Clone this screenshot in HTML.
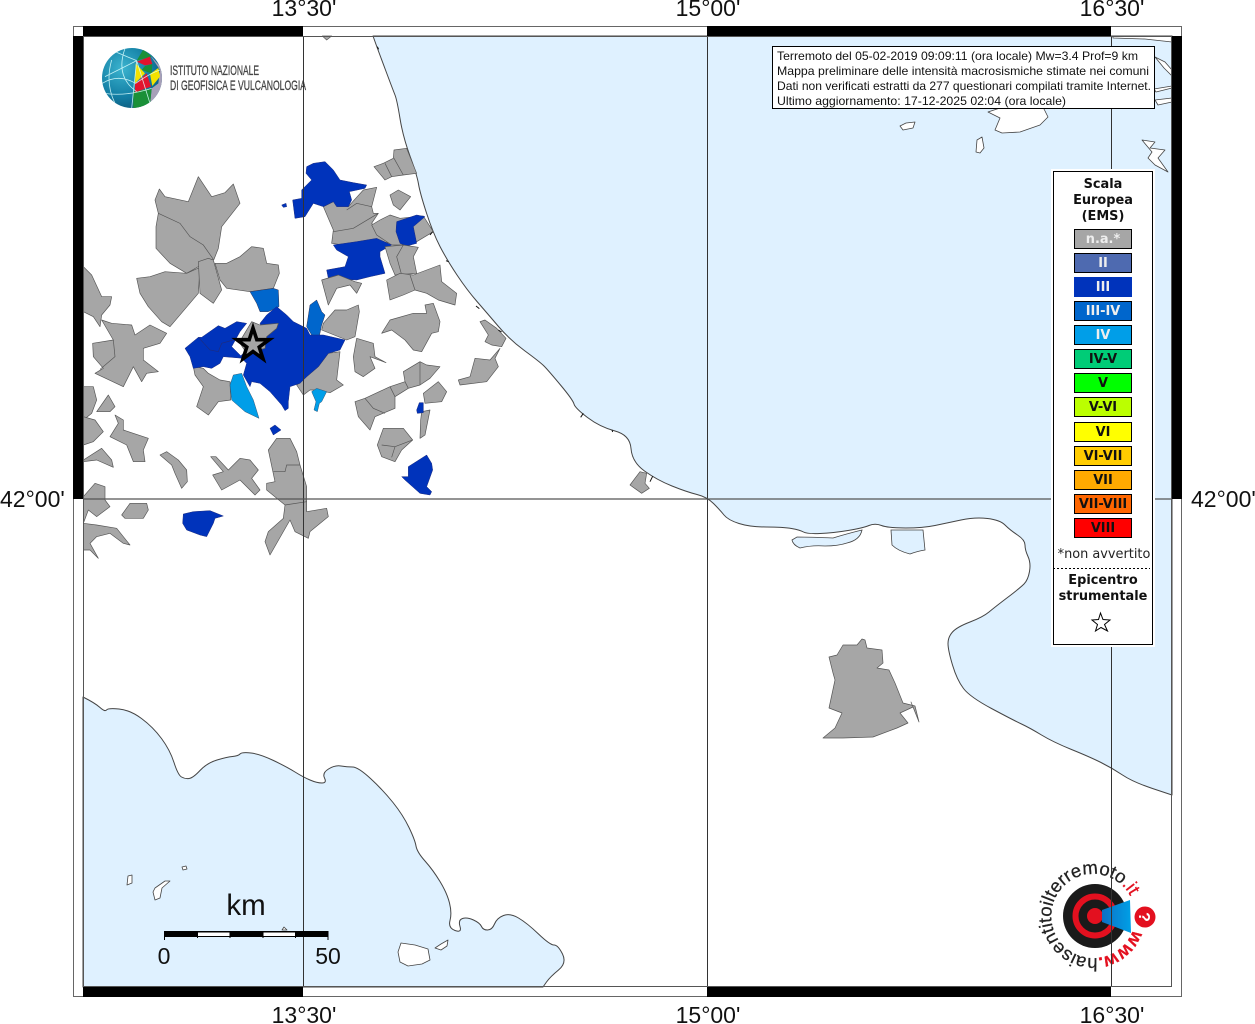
<!DOCTYPE html>
<html><head><meta charset="utf-8"><title>Mappa</title>
<style>
html,body{margin:0;padding:0;background:#fff}
svg{display:block}
text{font-family:"Liberation Sans",sans-serif}
.d{font-family:"DejaVu Sans",sans-serif;font-size:12.9px;text-anchor:middle}
.b{font-weight:bold}
.g{fill:#a6a6a6;stroke:#555;stroke-width:2;stroke-linejoin:round}
.n{fill:#0033bb;stroke:#1c2c80;stroke-width:1.5;stroke-linejoin:round}
.m{fill:#0066cc;stroke:#335;stroke-width:1.5}
.l{fill:#009ee8;stroke:#357;stroke-width:1.5}
.i{fill:none;stroke:#555;stroke-width:2}
.c{fill:#fff;stroke:#444;stroke-width:.8;stroke-linejoin:round}
.ax{font-size:23px;fill:#111}
</style></head><body>
<svg width="1255" height="1024" viewBox="0 0 1255 1024" xmlns="http://www.w3.org/2000/svg">
<rect width="1255" height="1024" fill="#fff"/>
<!-- Adriatic -->
<path fill="#dff1ff" stroke="#444" stroke-width="1" stroke-linejoin="round" d="M373 36L375.5 43Q378 50 385.5 70Q393 90 395 95Q397 100 400 118.5Q403 137 410 156Q417 175 418.5 184Q420 193 426.5 213Q433 233 440 246.5Q447 260 457 275Q467 290 477 301.5Q487 313 498.5 326.5Q510 340 525 351Q540 362 544 366Q548 370 560.5 385Q573 400 574 404Q575 408 587.5 417.5Q600 427 615 431Q630 435 631 448.5Q632 462 644.5 471Q657 480 672 486Q687 492 697 494.5Q707 497 713.5 503.5Q720 510 724 515Q728 520 739 523.5Q750 527 766.5 527Q783 527 791.5 528.5Q800 530 803.5 532Q807 534 820 533.5Q833 533 848 530.5Q863 528 869 525.5Q875 523 881.5 525.5Q888 528 905.5 528Q923 528 935 525.5Q947 523 961 520Q975 517 987.5 518.5Q1000 520 1005 525Q1010 530 1017.5 535Q1025 540 1025 545Q1025 550 1028 556.5Q1031 563 1029.5 571.5Q1028 580 1024 584Q1020 588 1007.5 597.5Q995 607 989 612Q983 617 970 622Q957 627 952.5 632Q948 637 948 643.5Q948 650 952.5 665Q957 680 963.5 688.5Q970 697 991.5 708.5Q1013 720 1021.5 724Q1030 728 1041.5 735Q1053 742 1071.5 749.5Q1090 757 1101 762.5Q1112 768 1122.5 775Q1133 782 1152.5 788.5L1172 795L1172 36Z"/>
<!-- lagoons -->
<path fill="#dff1ff" stroke="#444" stroke-width=".8" d="M792 540Q793 545 800 548Q812 545 825 546Q838 546 847 543Q860 540 862 530Q846 534 833 538Q810 537 797 537ZM891 530L892 545Q898 551 910 554Q918 551 925 550L923 530Z"/>
<!-- Adriatic islands -->
<path class="c" d="M988 112L1000 118 995 130 1002 133 1020 132 1040 125 1048 117 1043 107 1020 106 1000 108ZM900 126L906 123 915 122 913 128 903 130ZM977 140L982 137 984 148 980 153 976 152ZM1142 140L1155 142 1150 148 1165 150 1158 158 1168 172 1155 165 1148 158 1152 152ZM1113 36L1172 36 1172 42 1145 39 1113 38ZM1155 57L1165 62 1172 70 1172 76 1164 68ZM1154 89L1172 86 1172 88 1156 92ZM1155 100L1172 98 1172 102 1158 105Z"/>
<!-- Tyrrhenian -->
<path fill="#dff1ff" stroke="#444" stroke-width="1" stroke-linejoin="round" d="M83 697Q95 703 100 707.5Q105 712 106.5 710Q108 708 119 709Q130 710 141.5 718.5Q153 727 161.5 738.5Q170 750 174 762.5Q178 775 181.5 777Q185 779 189 778.5Q193 778 200 770.5Q207 763 217 760Q227 757 232.5 756.5Q238 756 240 754Q242 752 251 753Q260 754 273.5 760.5Q287 767 295 772Q303 777 310 780Q317 783 322 783Q327 783 324.5 778Q322 773 328.5 769Q335 765 341 766Q347 767 352.5 767Q358 767 370.5 778.5Q383 790 393 802.5Q403 815 409 827.5Q415 840 416 846Q417 852 425 861Q433 870 440 881.5Q447 893 449.5 903Q452 913 450 920.5Q448 928 455 930.5Q462 933 460 926.5Q458 920 462.5 918.5Q467 917 473.5 920Q480 923 481.5 926.5Q483 930 487.5 930Q492 930 494.5 924Q497 918 503.5 915.5Q510 913 518.5 918Q527 923 538.5 934Q550 945 554 945Q558 945 562.5 954Q567 963 558.5 970Q550 977 546.5 982L543 987L83 987Z"/>
<path class="c" d="M401 943L415 945 428 949 430 960 422 964 408 966 400 962 398 952ZM435 948L441 944 448 940 447 946 441 950ZM155 888L165 881 170 881 162 888 160 898 155 900 153 892ZM182 867L186 866 187 869 183 870ZM128 876L132 875 132 883 127 885ZM282 930L284 927 287 930Z"/>

<!-- Foggia area -->
<path class="g" style="stroke-width:.7" d="M862 639L857 645 843 645 837 655 829 657 833 673 835 680 829 708 842 713 835 728 823 738 843 738 873 737 897 728 908 723 900 713 913 707 911 702 919 722 915 706 903 703 895 683 889 670 877 668 883 663 882 650 867 648 865 640Z"/>

<!-- zoom 1 set -->
<g transform="translate(70 0) scale(.33333)">
<path class="g" d="M255 600L268 567 285 590 355 605 385 530 425 590 465 578 490 552 510 610 455 680 445 745 432 778 415 790 385 800 350 820 300 790 258 745 258 680 265 640Z"/>
<path class="i" d="M265 640L330 670 360 710 400 735 430 778"/>
<path class="g" d="M757 108L785 108 770 120Z"/>
<path class="g" d="M912 500L940 490 970 475 972 450 1010 445 1040 520 1000 525 965 530 945 540Z"/>
<path class="i" d="M945 490L965 530M972 475L1000 525"/>
<path class="g" d="M960 585L985 570 1022 590 990 630 970 615Z"/>
<path class="g" d="M760 620L790 605 835 620 848 605 880 570 920 562 905 620 910 640 925 640 905 670 930 690 965 720 965 730 900 720 820 735 785 730 790 690Z"/>
<path class="i" d="M830 630L860 610 905 620M790 695L850 685 925 640"/>
<path class="g" d="M905 675L930 660 960 645 990 655 1060 648 1090 695 1040 725 1005 735 965 735 920 705Z"/>
<path class="n" d="M710 500L730 490 765 485 790 510 810 540 850 548 890 555 885 565 838 575 845 600 835 620 800 620 790 605 760 620 730 610 705 650 675 655 668 600 695 595 695 570 725 540 708 520Z"/>
<path class="n" d="M635 615L648 610 650 620 640 622Z"/>
<path class="n" d="M980 665L1040 645 1065 650 1030 680 1040 730 1010 738 990 730 978 695Z"/>
<path class="n" d="M790 735L860 725 920 715 965 735 930 755 930 770 945 820 900 830 860 840 775 835 770 810 825 800 835 770 800 750Z"/>
</g>

<!-- zoom 10 set -->
<g transform="translate(370 20) scale(.33333)">
<path class="g" d="M45 680L100 675 145 682 130 710 140 760 75 765 60 730Z"/>
<path class="i" d="M100 675L80 710 95 765"/>
<path class="g" d="M330 905L345 900 380 925 408 955 395 980 365 975 345 965 355 945Z"/>
<path class="g" d="M390 985L375 1015 385 1040 350 1085 270 1095 265 1080 300 1070 315 1015 360 1020Z"/>
<path class="g" d="M810 1355L830 1360 825 1390 838 1405 815 1420 780 1395Z"/>
<path d="M22 80l4 8M180 645l8-10M228 722l8 3M318 858l10 8M385 930l10 6M632 1192l8-12M726 1230l2 6M840 1385l8-16" stroke="#111" stroke-width="3" fill="none"/>
</g>

<!-- zoom 2 set -->
<g transform="translate(80 260) scale(.33333)">
<path class="g" d="M170 55L210 50 255 35 320 40 360 22 355 100 270 200 245 185 205 140 180 100Z"/>
<path class="g" d="M355 5L385 -5 400 0 425 90 400 130 360 100Z"/>
<path class="g" d="M405 10L440 10 480 -10 515 -40 550 -35 560 10 595 15 598 40 580 85 510 95 440 85 420 60Z"/>
<path class="g" d="M725 60L775 45 825 65 845 70 830 100 810 75 770 85 745 135Z"/>
<path class="g" d="M920 60L960 40 1000 45 1080 15 1085 65 1130 100 1125 135 1075 120 1040 100 1005 90 970 105 930 120Z"/>
<path class="i" d="M990 45L1005 90"/>
<path class="g" d="M730 190L765 150 800 150 835 135 838 155 825 230 800 240 725 210Z"/>
<path class="g" d="M830 235L880 250 885 290 918 308 870 290 885 325 850 350 825 335 820 290Z" />
<path class="g" d="M905 220L930 180 1000 160 1040 160 1035 135 1060 130 1080 185 1075 215 1055 220 1025 275 1000 270 975 240 935 210Z"/>
<path class="g" d="M650 375L680 350 715 320 745 280 780 275 770 360 790 375 750 398 710 390 690 390 670 405Z"/>
<path class="g" d="M825 425L855 415 930 380 975 365 970 335 1020 305 1040 315 1080 320 1050 355 1020 375 985 385 945 410 945 445 885 470 870 510 835 470Z"/>
<path class="i" d="M855 415L880 445 915 460M930 380L945 410M975 365L985 385M1020 305L1020 375"/>
<path class="g" d="M1030 400L1075 365 1100 395 1085 425 1035 430Z"/>
<path class="g" d="M1025 455L1050 450 1035 525 1020 535 1022 480Z"/>
<path class="g" d="M892 555L910 505 970 505 998 540 965 570 945 605 905 590Z"/>
<path class="i" d="M905 555L945 560 998 540M945 560L935 592"/>
<path class="g" d="M10 20L35 45 65 110 95 110 90 135 65 165 60 200 40 170 10 155Z"/>
<path class="g" d="M38 250L100 240 65 180 95 190 155 195 165 225 210 195 260 220 240 250 190 265 190 300 235 335 200 340 185 365 160 320 130 380 45 340 70 325 40 290Z"/>
<path class="i" d="M100 240L105 290 60 328"/>
<path class="g" d="M340 320L370 325 385 340 420 360 450 365 452 420 415 425 385 465 350 440 370 380 345 345Z"/>
<path class="g" d="M10 380L40 380 50 420 35 460 10 480Z"/>
<path class="g" d="M50 455L85 405 105 440 90 455Z"/>
<path class="g" d="M10 470L45 480 70 515 40 545 10 555Z"/>
<path class="g" d="M10 600L65 565 95 600 100 622 50 600 10 605Z"/>
<path class="g" d="M90 530L115 490 105 465 130 480 130 510 205 535 190 570 195 605 160 605 140 555Z"/>
<path class="g" d="M240 585L260 575 295 600 320 630 322 665 305 685 285 640 275 615Z"/>
<path class="g" d="M392 590L408 590 445 630 480 595 510 600 535 630 515 655 540 690 525 705 480 660 425 690 398 645 430 635Z"/>
<path class="g" d="M565 570L590 535 630 535 650 575 660 615 680 680 680 755 740 745 745 770 690 815 685 835 645 815 630 780 570 885 555 845 565 815 610 775 615 735 560 690 560 670 585 665Z"/>
<path class="i" d="M580 635L615 635 620 615 660 615M615 735L680 725"/>
<path class="g" d="M10 710L45 670 75 680 75 720 90 740 50 770 25 750 10 790 50 795 110 805 150 855 130 850 90 820 50 830 30 850 55 895 30 870 10 870Z"/>
<path class="g" d="M125 765L150 730 200 730 205 750 190 775 135 775Z"/>

<path class="m" d="M510 95L580 85 595 90 597 140 565 155 540 155 530 130Z"/>
<path class="m" d="M680 200L690 135 710 120 725 155 735 165 725 195 718 228 695 225Z"/>
<path class="n" d="M540 190L560 165 590 140 620 165 640 185 680 205 690 225 730 225 795 240 780 270 745 280 715 320 680 350 660 370 630 380 625 425 625 445 615 452 605 435 570 395 540 370 515 365 510 380 490 345 500 310 480 290 520 250 560 240Z"/>
<path class="n" d="M315 265L355 232 365 232 415 197 435 205 470 185 500 190 480 215 455 260 490 295 430 290 420 310 395 325 370 320 340 325 330 290Z"/>
<path fill="none" stroke="#1c2c80" stroke-width="2" d="M355 232L390 270 415 275 425 250 460 240"/>
<path class="g" d="M515 185L540 195 595 190 590 205 560 230 555 265 500 280 480 250 485 235Z"/>
<path class="l" d="M460 345L485 340 500 380 520 420 537 475 495 455 455 420 450 375Z"/>
<path class="l" d="M695 395L710 385 740 395 725 425 718 430 712 455 702 450 708 425Z"/>
<path class="n" d="M570 505L585 495 603 510 580 525Z"/>
<path class="n" d="M1010 450L1018 428 1030 428 1030 458 1012 460Z"/>
<path class="n" d="M985 620L1040 585 1055 610 1058 630 1040 680 1055 695 1050 705 1020 700 975 660 965 650 985 650Z"/>
<path class="n" d="M310 762L340 755 390 752 430 768 405 775 400 790 380 830 360 825 320 810 308 790Z"/>
</g>

<!-- epicentre star -->
<polygon points="253,328 256.8,339.7 269.2,339.7 259.2,347 263,358.8 253,351.5 243,358.8 246.8,347 236.8,339.7 249.2,339.7" fill="#a6a6a6" stroke="#000" stroke-width="3.6" stroke-miterlimit="4"/>

<!-- INGV logo -->
<defs>
<radialGradient id="gl" cx=".35" cy=".35" r=".75"><stop offset="0" stop-color="#3bb4cf"/><stop offset=".6" stop-color="#127da3"/><stop offset="1" stop-color="#0d4f70"/></radialGradient>
<linearGradient id="cone" x1="0" y1="0" x2="1" y2="0"><stop offset="0" stop-color="#0d6fc4"/><stop offset="1" stop-color="#00a0e6"/></linearGradient>
<clipPath id="gc"><circle cx="132" cy="78" r="30"/></clipPath>
</defs>
<g clip-path="url(#gc)">
<rect x="100" y="46" width="64" height="64" fill="url(#gl)"/>
<g transform="translate(95 40) scale(.33333)">
<path fill="#a7a0b8" d="M165 45L205 90 200 150 165 195 170 145 190 130 195 90Z"/>
<path fill="#1a9038" d="M125 62L145 28 170 50ZM150 78L172 72 170 100 140 90ZM115 155L170 145 165 195 115 205Z"/>
<path fill="#e2142d" d="M125 65L165 50 172 72 150 76ZM120 132L155 100 168 140 120 157Z"/>
<path fill="#f2e200" d="M122 70L150 100 120 130ZM165 102L190 84 195 110 172 138Z"/>
<g fill="none" stroke="#dff" stroke-width="2.4" opacity=".85">
<path d="M125 62L110 205M125 62L60 35M125 62L30 110M125 62L165 190M50 60Q30 130 60 190M90 25Q60 110 125 155M22 130Q70 100 122 130 165 100 195 90M30 160Q90 170 170 145"/>
</g></g></g>
<text x="170" y="75" font-size="14" fill="#444" stroke="#444" stroke-width=".3" textLength="89" lengthAdjust="spacingAndGlyphs">ISTITUTO NAZIONALE</text>
<text x="170" y="90" font-size="14" fill="#444" stroke="#444" stroke-width=".3" textLength="136" lengthAdjust="spacingAndGlyphs">DI GEOFISICA E VULCANOLOGIA</text>

<!-- haisentito logo -->
<circle cx="1095" cy="916" r="32" fill="#1a1a1a"/>
<circle cx="1095" cy="916" r="19.5" fill="none" stroke="#e3101f" stroke-width="6"/>
<circle cx="1095" cy="916" r="8" fill="#e3101f"/>
<path d="M1102 910L1130 900 1131 933 1118 928 1102 922Z" fill="url(#cone)"/>
<circle cx="1145" cy="917" r="10.5" fill="#e3101f"/>
<text x="1145" y="923" font-size="16" font-weight="bold" fill="#fff" text-anchor="middle" transform="rotate(90 1145 917)">?</text>
<path id="ring" fill="none" d="M1133 929.600A42 42 0 1 1 1133 902.400"/>
<text font-size="18.5" fill="#222" stroke="#222" stroke-width=".25"><textPath href="#ring"><tspan fill="#e3101f" stroke="#e3101f" font-weight="bold">www.</tspan>haisentito<tspan font-weight="normal">il</tspan>terremoto<tspan fill="#e3101f" stroke="#e3101f">.it</tspan></textPath></text>

<!-- grid -->
<path d="M303.5 36V987M707.5 36V987M1111.5 36V987" stroke="#333" stroke-width="1" fill="none"/>
<path d="M83 499H1172" stroke="#555" stroke-width="1.3" fill="none"/>

<!-- frame -->
<rect x="73.5" y="26.5" width="1108" height="970" fill="none" stroke="#666" stroke-width="1"/>
<rect x="83.5" y="36.5" width="1088" height="950" fill="none" stroke="#555" stroke-width="1"/>
<path fill="#000" d="M83 26H303V36H83ZM707 26H1111V36H707ZM83 987H303V997H83ZM707 987H1111V997H707ZM73 36H83V499H73ZM1172 36H1182V499H1172Z"/>

<!-- axis labels -->
<g class="ax">
<text class="ax" x="304" y="16" text-anchor="middle">13°30'</text>
<text class="ax" x="708" y="16" text-anchor="middle">15°00'</text>
<text class="ax" x="1112" y="16" text-anchor="middle">16°30'</text>
<text class="ax" x="304" y="1023" text-anchor="middle">13°30'</text>
<text class="ax" x="708" y="1023" text-anchor="middle">15°00'</text>
<text class="ax" x="1112" y="1023" text-anchor="middle">16°30'</text>
<text class="ax" x="0" y="507">42°00'</text>
<text class="ax" x="1191" y="507">42°00'</text>
</g>

<!-- scale bar -->
<path d="M164 931H328V937H164Z" fill="#000"/>
<path d="M197 932.5H230V936H197ZM263 932.5H295V936H263Z" fill="#fff"/>
<path d="M164.5 931V940M197.5 931V938M230 931V938M263 931V938M295.5 931V938M328 931V940" stroke="#000" stroke-width="1" fill="none"/>
<text x="246" y="915" font-size="29.5" text-anchor="middle" fill="#111">km</text>
<text x="164" y="964" font-size="23" text-anchor="middle" fill="#111">0</text>
<text x="328" y="964" font-size="23" text-anchor="middle" fill="#111">50</text>

<!-- info box -->
<rect x="772.5" y="46.5" width="382" height="62" fill="#fff" stroke="#000" stroke-width="1"/>
<g font-size="12" fill="#111">
<text x="777" y="60" textLength="361" lengthAdjust="spacingAndGlyphs">Terremoto del 05-02-2019 09:09:11 (ora locale) Mw=3.4 Prof=9 km</text>
<text x="777" y="75" textLength="372" lengthAdjust="spacingAndGlyphs">Mappa preliminare delle intensità macrosismiche stimate nei comuni</text>
<text x="777" y="90" textLength="374" lengthAdjust="spacingAndGlyphs">Dati non verificati estratti da 277 questionari compilati tramite Internet.</text>
<text x="777" y="105" textLength="289" lengthAdjust="spacingAndGlyphs">Ultimo aggiornamento: 17-12-2025 02:04 (ora locale)</text>
</g>

<!-- legend -->
<rect x="1051" y="169" width="104" height="478" fill="#fff"/>
<rect x="1053.5" y="171.5" width="99" height="473" fill="#fff" stroke="#000" stroke-width="1"/>
<g fill="#111">
<text class="d b" x="1103" y="188">Scala</text>
<text class="d b" x="1103" y="204">Europea</text>
<text class="d b" x="1103" y="220">(EMS)</text>
</g>
<g stroke="#000" stroke-width="1">
<rect x="1074.5" y="229.5" width="57" height="19" fill="#a6a6a6"/>
<rect x="1074.5" y="253.5" width="57" height="19" fill="#4e6ab0"/>
<rect x="1074.5" y="277.5" width="57" height="19" fill="#0033bb" stroke="#0033bb"/>
<rect x="1074.5" y="301.5" width="57" height="19" fill="#0066cc"/>
<rect x="1074.5" y="325.5" width="57" height="19" fill="#009ee8"/>
<rect x="1074.5" y="349.5" width="57" height="19" fill="#00cc77"/>
<rect x="1074.5" y="373.5" width="57" height="19" fill="#00ff00"/>
<rect x="1074.5" y="397.5" width="57" height="19" fill="#bbff00"/>
<rect x="1074.5" y="422.5" width="57" height="19" fill="#ffff00"/>
<rect x="1074.5" y="446.5" width="57" height="19" fill="#ffcc00"/>
<rect x="1074.5" y="470.5" width="57" height="19" fill="#ffaa00"/>
<rect x="1074.5" y="494.5" width="57" height="19" fill="#ff6600"/>
<rect x="1074.5" y="518.5" width="57" height="19" fill="#ff0000"/>
</g>
<g fill="#eee">
<text class="d b" x="1103" y="243">n.a.*</text>
<text class="d b" x="1103" y="267">II</text>
<text class="d b" x="1103" y="291">III</text>
<text class="d b" x="1103" y="315">III-IV</text>
<text class="d b" x="1103" y="339">IV</text>
</g>
<g fill="#111">
<text class="d b" x="1103" y="363">IV-V</text>
<text class="d b" x="1103" y="387">V</text>
<text class="d b" x="1103" y="411">V-VI</text>
<text class="d b" x="1103" y="436">VI</text>
<text class="d b" x="1103" y="460">VI-VII</text>
<text class="d b" x="1103" y="484">VII</text>
<text class="d b" x="1103" y="508">VII-VIII</text>
<text class="d b" x="1103" y="532">VIII</text>
<text class="d" x="1104" y="558" fill="#222">*non avvertito</text>
<text class="d b" x="1103" y="584">Epicentro</text>
<text class="d b" x="1103" y="600">strumentale</text>
</g>
<path d="M1053 568.5H1150" stroke="#000" stroke-width="1" stroke-dasharray="2 2"/>
<polygon points="1100.5,613 1103,619.5 1110,620 1104.5,624.5 1107.5,631 1101,627.5 1095.5,631 1097.5,624.5 1092,620 1098.5,619.5" fill="#fff" stroke="#000" stroke-width="1"/>
</svg>
</body></html>
